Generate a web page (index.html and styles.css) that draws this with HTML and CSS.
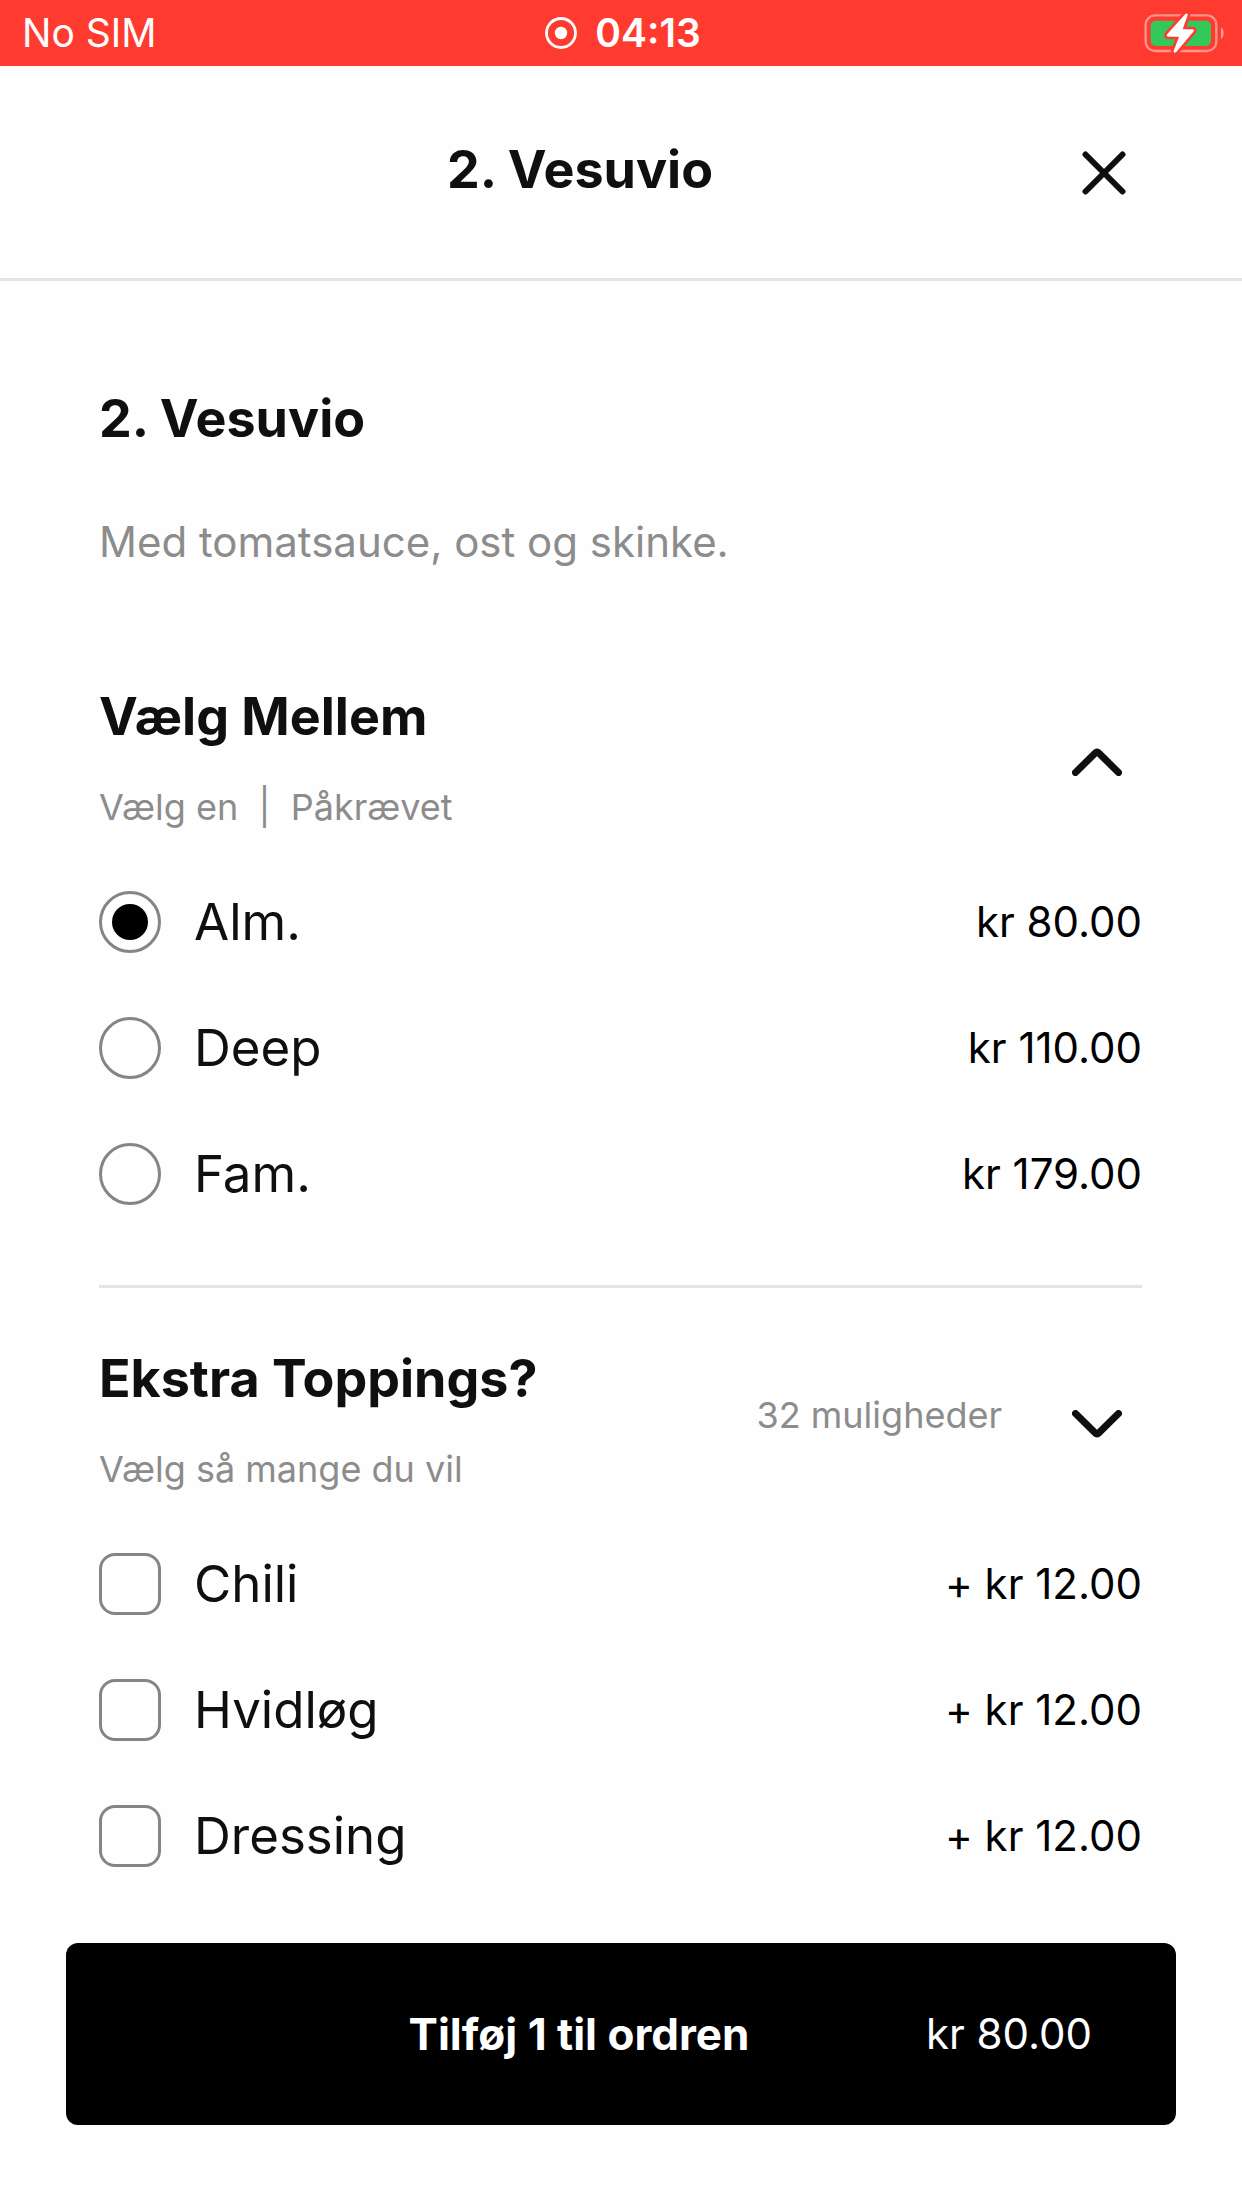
FILE: index.html
```html
<!DOCTYPE html>
<html lang="da">
<head>
<meta charset="utf-8">
<meta name="viewport" content="width=device-width, initial-scale=1">
<title>2. Vesuvio</title>
<link rel="stylesheet" href="styles.css">
</head>
<body>
<div class="status">
  <span class="status-carrier">No SIM</span>
  <span class="status-clock">
    <svg width="32" height="32" viewBox="0 0 32 32" aria-hidden="true"><circle cx="16" cy="16" r="14.5" fill="none" stroke="currentColor" stroke-width="2.8"/><circle cx="16" cy="16" r="6.2" fill="currentColor"/></svg>
    04:13
  </span>
  <svg class="status-battery" width="80" height="40" viewBox="0 0 240 120" role="img" aria-label="Oplader">
    <rect x="5" y="7" width="212" height="107" rx="28" fill="none" stroke="#fff" stroke-opacity=".45" stroke-width="7"/>
    <path d="M231 43q8 6 8 18t-8 18z" fill="#fff" fill-opacity=".5"/>
    <rect x="20" y="23" width="181" height="76" rx="15" fill="#34c759"/>
    <path d="M124 3q8-4 7 4L116 49h30q7 1 2 7L97 117q-9 5-8-3l16-43H73q-8-1-3-8z" fill="#fff" stroke="#ff3b30" stroke-width="16" stroke-linejoin="round" paint-order="stroke"/>
  </svg>
</div>

<header class="topbar">
  <h2 class="topbar-title">2. Vesuvio</h2>
  <button class="close" type="button" aria-label="Luk">
    <svg width="44" height="44" viewBox="0 0 44 44" aria-hidden="true"><path d="M3.5 3.5l37 37M40.5 3.5l-37 37"/></svg>
  </button>
</header>

<main class="content">
  <h1 class="title">2. Vesuvio</h1>
  <p class="description">Med tomatsauce, ost og skinke.</p>

  <section class="group">
    <div class="group-head">
      <div class="group-text">
        <h2 class="title" id="size-title">Vælg Mellem</h2>
        <p class="hint">Vælg en &nbsp;|&nbsp; Påkrævet</p>
      </div>
      <button class="toggle" type="button" aria-expanded="true" aria-label="Skjul Vælg Mellem">
        <svg width="50" height="28" viewBox="0 0 50 28" aria-hidden="true"><path d="M3.5 24.5L23 5.2q2-2 4 0L46.5 24.5"/></svg>
      </button>
    </div>
    <div role="radiogroup" aria-labelledby="size-title">
      <label class="option"><input class="control radio" type="radio" name="size" checked><span class="option-name">Alm.</span><span class="price">kr 80.00</span></label>
      <label class="option"><input class="control radio" type="radio" name="size"><span class="option-name">Deep</span><span class="price">kr 110.00</span></label>
      <label class="option"><input class="control radio" type="radio" name="size"><span class="option-name">Fam.</span><span class="price">kr 179.00</span></label>
    </div>
  </section>

  <section class="group">
    <div class="group-head">
      <div class="group-text">
        <h2 class="title" id="toppings-title">Ekstra Toppings?</h2>
        <p class="hint">Vælg så mange du vil</p>
      </div>
      <span class="count">32 muligheder</span>
      <button class="toggle" type="button" aria-expanded="false" aria-label="Vis alle toppings">
        <svg width="50" height="28" viewBox="0 0 50 28" aria-hidden="true"><path d="M3.5 3.5L23 22.8q2 2 4 0L46.5 3.5"/></svg>
      </button>
    </div>
    <div role="group" aria-labelledby="toppings-title">
      <label class="option"><input class="control checkbox" type="checkbox"><span class="option-name">Chili</span><span class="price">+ kr 12.00</span></label>
      <label class="option"><input class="control checkbox" type="checkbox"><span class="option-name">Hvidløg</span><span class="price">+ kr 12.00</span></label>
      <label class="option"><input class="control checkbox" type="checkbox"><span class="option-name">Dressing</span><span class="price">+ kr 12.00</span></label>
    </div>
  </section>
</main>

<footer class="footer">
  <button class="add" type="button">
    <span class="add-label">Tilføj 1 til ordren</span>
    <span class="add-price">kr 80.00</span>
  </button>
</footer>
</body>
</html>
```
FILE: styles.css
```css
* {
  box-sizing: border-box;
}

body {
  margin: 0;
  min-height: 100vh;
  display: flex;
  flex-direction: column;
  background: #fefefe;
  color: #0f0f0f;
  font-family: Inter, "Liberation Sans", sans-serif;
  font-size: 42px;
  line-height: 54px;
}

h1,
h2,
p {
  margin: 0;
}

button {
  border: 0;
  background: none;
  color: inherit;
  font: inherit;
  cursor: pointer;
}

/* Status bar */
.status {
  display: grid;
  grid-template-columns: 1fr auto 1fr;
  align-items: center;
  height: 66px;
  padding: 0 18px 0 22px;
  background: #ff3b30;
  color: #fff;
  font-size: 39px;
}

.status-clock {
  display: flex;
  align-items: center;
  gap: 18px;
  font-weight: 600;
}

.status-battery {
  justify-self: end;
}

/* Top bar */
.topbar {
  display: flex;
  align-items: center;
  height: 215px;
  padding: 0 74px 4px 120px;
  border-bottom: 3px solid #e4e4e4;
}

.topbar-title {
  flex: 1;
  text-align: center;
  font-size: 52px;
  line-height: 64px;
  font-weight: 700;
}

.close {
  display: flex;
  margin-top: 6px;
  padding: 42px;
}

.close svg,
.toggle svg {
  fill: none;
  stroke: currentColor;
  stroke-width: 6;
  stroke-linecap: round;
}

.toggle svg {
  stroke-width: 7;
}

/* Dish and its option groups */
.content {
  flex: 1;
  padding: 106px 100px 0 99px;
}

.title {
  font-size: 52px;
  line-height: 64px;
  font-weight: 700;
}

.description {
  margin: 64px 0 116px;
  color: #8c8c8c;
}

.group + .group {
  margin-top: 48px;
  padding-top: 59px;
  border-top: 3px solid #e4e4e4;
}

.group-head {
  display: flex;
  align-items: center;
  margin-bottom: 30px;
}

.group-text {
  display: grid;
  flex: 1;
  gap: 36px;
}

.hint,
.count {
  color: #8c8c8c;
  font-size: 36px;
  line-height: 44px;
}

.count {
  padding-bottom: 8px;
  margin-right: 50px;
}

.toggle {
  display: flex;
  margin-top: 10px;
  padding: 20px;
}

.option {
  display: flex;
  align-items: center;
  min-height: 126px;
  cursor: pointer;
}

.control {
  appearance: none;
  display: grid;
  place-items: center;
  width: 62px;
  height: 62px;
  margin: 0 33px 0 0;
  border: 3px solid #858585;
}

.radio {
  border-radius: 50%;
}

.radio:checked::before {
  content: "";
  width: 36px;
  height: 36px;
  border-radius: 50%;
  background: #000;
}

.checkbox {
  border-radius: 16px;
}

.checkbox:checked {
  background: #000;
}

.option-name {
  flex: 1;
  font-size: 51px;
  line-height: 64px;
}

.price {
  color: #000;
}

/* Order button */
.footer {
  padding: 43px 66px 83px;
}

.add {
  display: grid;
  align-items: center;
  width: 100%;
  min-height: 182px;
  padding: 0 84px 0 0;
  border-radius: 12px;
  background: #000;
  color: #fff;
}

.add-label,
.add-price {
  grid-area: 1 / 1;
}

.add-label {
  font-size: 44px;
  font-weight: 700;
}

.add-price {
  justify-self: end;
}
```
